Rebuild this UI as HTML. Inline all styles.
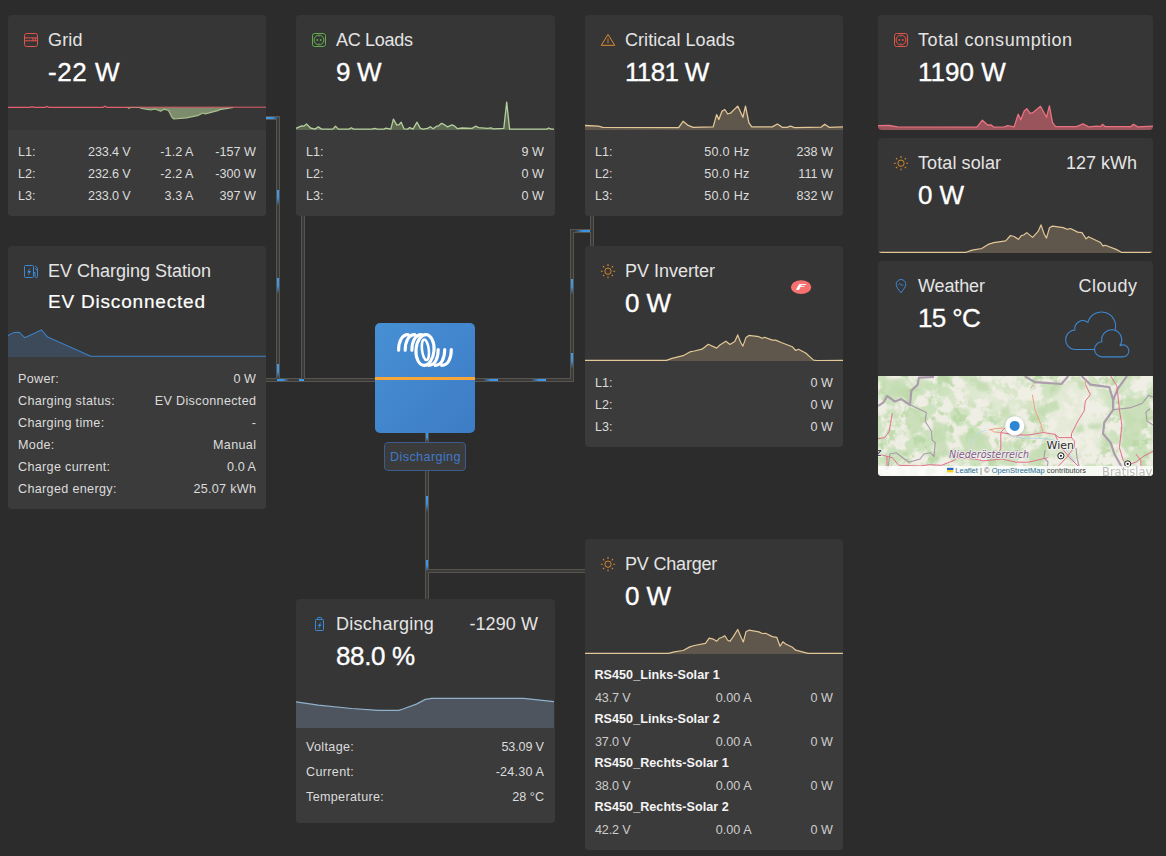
<!DOCTYPE html>
<html lang="en"><head><meta charset="utf-8"><title>Dashboard</title>
<style>
html,body{margin:0;padding:0}
body{width:1166px;height:856px;background:#2c2c2c;position:relative;overflow:hidden;font-family:"Liberation Sans",sans-serif;}
.card{position:absolute;background:#363636;border-radius:4px;overflow:hidden}
.det{position:absolute;left:0;right:0;bottom:0;background:#3b3b3b}
.t{position:absolute;white-space:nowrap}
.v{-webkit-text-stroke:0.35px #fff}
svg{position:absolute;left:0;top:0}
</style></head><body>

<div class="card" id="grid" style="left:8px;top:15px;width:258px;height:201px"><div class="det" style="top:115px"></div></div>
<div class="card" id="ac" style="left:296px;top:15px;width:259px;height:201px"><div class="det" style="top:115px"></div></div>
<div class="card" id="crit" style="left:585px;top:15px;width:258px;height:201px"><div class="det" style="top:115px"></div></div>
<div class="card" id="cons" style="left:878px;top:15px;width:275px;height:115px"></div>
<div class="card" id="solar" style="left:878px;top:138px;width:275px;height:115px"></div>
<div class="card" id="weather" style="left:878px;top:261px;width:275px;height:215px"></div>
<div class="card" id="ev" style="left:8px;top:246px;width:258px;height:263px"><div class="det" style="top:111px"></div></div>
<div class="card" id="pvi" style="left:585px;top:246px;width:258px;height:201px"><div class="det" style="top:115px"></div></div>
<div class="card" id="bat" style="left:296px;top:599px;width:259px;height:224px"><div class="det" style="top:129px"></div></div>
<div class="card" id="pvc" style="left:585px;top:539px;width:258px;height:311px"><div class="det" style="top:115px"></div></div>
<svg width="1166" height="856" viewBox="0 0 1166 856">
<defs>
<linearGradient id="gd" x1="0" y1="0" x2="0" y2="1"><stop offset="0" stop-color="#3d9bf0"/><stop offset="0.5" stop-color="#3d9bf0" stop-opacity="0.9"/><stop offset="1" stop-color="#3d9bf0" stop-opacity="0"/></linearGradient>
<linearGradient id="gu" x1="0" y1="1" x2="0" y2="0"><stop offset="0" stop-color="#3d9bf0"/><stop offset="0.5" stop-color="#3d9bf0" stop-opacity="0.9"/><stop offset="1" stop-color="#3d9bf0" stop-opacity="0"/></linearGradient>
<linearGradient id="gr" x1="0" y1="0" x2="1" y2="0"><stop offset="0" stop-color="#3d9bf0"/><stop offset="0.5" stop-color="#3d9bf0" stop-opacity="0.9"/><stop offset="1" stop-color="#3d9bf0" stop-opacity="0"/></linearGradient>
<linearGradient id="gl" x1="1" y1="0" x2="0" y2="0"><stop offset="0" stop-color="#3d9bf0"/><stop offset="0.5" stop-color="#3d9bf0" stop-opacity="0.9"/><stop offset="1" stop-color="#3d9bf0" stop-opacity="0"/></linearGradient>
<linearGradient id="inv" x1="0" y1="0" x2="1" y2="1"><stop offset="0" stop-color="#4790d4"/><stop offset="1" stop-color="#3d7cc6"/></linearGradient>
</defs>
<path d="M266,118 L278,118 L278,380" fill="none" stroke="#58554f" stroke-width="4" stroke-linejoin="miter"/>
<path d="M266,380 L375,380" fill="none" stroke="#58554f" stroke-width="4" stroke-linejoin="miter"/>
<path d="M303,216 L303,380" fill="none" stroke="#58554f" stroke-width="4" stroke-linejoin="miter"/>
<path d="M475,380 L572,380 L572,231 L592,231" fill="none" stroke="#58554f" stroke-width="4" stroke-linejoin="miter"/>
<path d="M592,216 L592,246" fill="none" stroke="#58554f" stroke-width="4" stroke-linejoin="miter"/>
<path d="M427,433 L427,599" fill="none" stroke="#58554f" stroke-width="4" stroke-linejoin="miter"/>
<path d="M427,571 L585,571" fill="none" stroke="#58554f" stroke-width="4" stroke-linejoin="miter"/>
<path d="M266,118 L278,118 L278,380" fill="none" stroke="#3b3a39" stroke-width="2" stroke-linejoin="miter"/>
<path d="M266,380 L375,380" fill="none" stroke="#3b3a39" stroke-width="2" stroke-linejoin="miter"/>
<path d="M303,216 L303,380" fill="none" stroke="#3b3a39" stroke-width="2" stroke-linejoin="miter"/>
<path d="M475,380 L572,380 L572,231 L592,231" fill="none" stroke="#3b3a39" stroke-width="2" stroke-linejoin="miter"/>
<path d="M592,216 L592,246" fill="none" stroke="#3b3a39" stroke-width="2" stroke-linejoin="miter"/>
<path d="M427,433 L427,599" fill="none" stroke="#3b3a39" stroke-width="2" stroke-linejoin="miter"/>
<path d="M427,571 L585,571" fill="none" stroke="#3b3a39" stroke-width="2" stroke-linejoin="miter"/>
<rect x="266" y="117" width="13" height="2" fill="url(#gr)"/>
<rect x="277" y="190" width="2" height="16" fill="url(#gd)"/>
<rect x="277" y="278" width="2" height="16" fill="url(#gd)"/>
<rect x="277" y="364" width="2" height="15" fill="url(#gd)"/>
<rect x="277" y="379" width="12" height="2" fill="url(#gr)"/>
<rect x="299" y="379" width="5" height="2" fill="#3d9bf0"/>
<rect x="483" y="379" width="15" height="2" fill="url(#gl)"/>
<rect x="531" y="379" width="15" height="2" fill="url(#gl)"/>
<rect x="571" y="279" width="2" height="16" fill="url(#gd)"/>
<rect x="571" y="353" width="2" height="16" fill="url(#gd)"/>
<rect x="575" y="230" width="15" height="2" fill="url(#gl)"/>
<rect x="426" y="433" width="2" height="9" fill="url(#gd)"/>
<rect x="426" y="496" width="2" height="16" fill="url(#gd)"/>
<rect x="426" y="560" width="2" height="12" fill="url(#gd)"/>
</svg>
<svg width="1166" height="856" viewBox="0 0 1166 856">
<path d="M127.5,107.5 L129.0,108.2 L130.5,107.5 L139.5,107.5 L141.8,108.5 L150.7,110.0 L155.0,109.0 L160.7,111.2 L164.0,109.2 L168.5,110.5 L171.9,117.2 L174.0,119.0 L186.4,117.9 L197.5,115.6 L203.0,113.0 L205.3,113.9 L217.6,110.7 L219.8,109.6 L233.2,107.5 Z" fill="#7c8c6c"/>
<path d="M127.5,107.5 L129.0,108.2 L130.5,107.5 L139.5,107.5 L141.8,108.5 L150.7,110.0 L155.0,109.0 L160.7,111.2 L164.0,109.2 L168.5,110.5 L171.9,117.2 L174.0,119.0 L186.4,117.9 L197.5,115.6 L203.0,113.0 L205.3,113.9 L217.6,110.7 L219.8,109.6 L233.2,107.5" fill="none" stroke="#a9c08f" stroke-width="1.2" stroke-linejoin="round"/>
<path d="M8.0,107.4 L30.0,107.4 L32.0,106.7 L34.0,107.4 L45.0,107.4 L47.0,106.5 L49.0,107.4 L103.0,107.4 L105.0,106.3 L107.0,107.4 L128.4,107.4" fill="none" stroke="#e2606f" stroke-width="1.2"/>
<path d="M128.4,107.2 L266,107.2" fill="none" stroke="#e2606f" stroke-width="1"/>
<path d="M296.0,128.4 L301.6,125.8 L303.8,126.2 L306.5,124.0 L310.5,128.0 L315.0,129.1 L318.3,126.9 L321.6,129.1 L332.8,129.1 L335.5,126.2 L338.4,129.1 L349.0,129.1 L351.3,127.8 L353.5,129.1 L371.8,129.1 L374.5,128.4 L377.4,129.1 L384.0,129.1 L385.9,128.2 L390.8,129.1 L393.4,119.1 L396.8,125.1 L399.0,124.7 L401.2,122.2 L404.1,128.9 L407.5,129.1 L409.7,127.6 L413.0,129.1 L417.0,122.2 L420.4,128.4 L423.0,129.1 L427.5,128.4 L430.4,126.7 L433.1,128.7 L436.5,126.2 L438.7,125.8 L441.6,123.3 L444.3,124.7 L447.6,126.9 L452.0,124.9 L454.7,126.2 L457.6,128.7 L462.1,128.0 L472.1,128.4 L475.5,126.2 L478.8,127.6 L487.7,128.4 L491.0,127.8 L493.3,128.9 L503.8,128.4 L506.7,102.1 L509.6,129.1 L546.8,129.1 L548.6,128.0 L551.3,129.1 L554.0,129.1 L554.0,130 L296.0,130 Z" fill="#5c6651" stroke="none"/>
<path d="M296.0,128.4 L301.6,125.8 L303.8,126.2 L306.5,124.0 L310.5,128.0 L315.0,129.1 L318.3,126.9 L321.6,129.1 L332.8,129.1 L335.5,126.2 L338.4,129.1 L349.0,129.1 L351.3,127.8 L353.5,129.1 L371.8,129.1 L374.5,128.4 L377.4,129.1 L384.0,129.1 L385.9,128.2 L390.8,129.1 L393.4,119.1 L396.8,125.1 L399.0,124.7 L401.2,122.2 L404.1,128.9 L407.5,129.1 L409.7,127.6 L413.0,129.1 L417.0,122.2 L420.4,128.4 L423.0,129.1 L427.5,128.4 L430.4,126.7 L433.1,128.7 L436.5,126.2 L438.7,125.8 L441.6,123.3 L444.3,124.7 L447.6,126.9 L452.0,124.9 L454.7,126.2 L457.6,128.7 L462.1,128.0 L472.1,128.4 L475.5,126.2 L478.8,127.6 L487.7,128.4 L491.0,127.8 L493.3,128.9 L503.8,128.4 L506.7,102.1 L509.6,129.1 L546.8,129.1 L548.6,128.0 L551.3,129.1 L554.0,129.1" fill="none" stroke="#b4cf9d" stroke-width="1.3" stroke-linejoin="round"/>
<path d="M585.0,125.5 L598.4,126.2 L602.8,127.3 L678.6,127.6 L683.1,121.3 L687.6,125.1 L693.1,127.3 L713.2,126.9 L716.6,114.6 L718.8,119.5 L722.1,111.1 L724.8,109.5 L727.7,114.0 L731.0,112.8 L737.7,106.1 L742.9,117.3 L745.5,106.1 L748.9,122.9 L751.8,126.9 L772.3,126.9 L777.4,124.0 L782.3,127.3 L786.8,127.3 L790.6,126.2 L794.6,127.6 L821.3,127.1 L824.7,124.2 L829.1,127.3 L843.0,126.9 L843.0,130 L585.0,130 Z" fill="#5f574b" stroke="none"/>
<path d="M585.0,125.5 L598.4,126.2 L602.8,127.3 L678.6,127.6 L683.1,121.3 L687.6,125.1 L693.1,127.3 L713.2,126.9 L716.6,114.6 L718.8,119.5 L722.1,111.1 L724.8,109.5 L727.7,114.0 L731.0,112.8 L737.7,106.1 L742.9,117.3 L745.5,106.1 L748.9,122.9 L751.8,126.9 L772.3,126.9 L777.4,124.0 L782.3,127.3 L786.8,127.3 L790.6,126.2 L794.6,127.6 L821.3,127.1 L824.7,124.2 L829.1,127.3 L843.0,126.9" fill="none" stroke="#e3c798" stroke-width="1.3" stroke-linejoin="round"/>
<clipPath id="cc"><rect x="878" y="15" width="275" height="115" rx="4"/></clipPath><g clip-path="url(#cc)">
<path d="M878.0,125.7 L889.2,125.5 L897.6,126.9 L976.9,127.2 L982.4,120.2 L987.7,125.0 L991.3,125.0 L993.7,127.2 L1004.5,126.9 L1007.6,125.7 L1014.1,126.9 L1018.2,114.2 L1020.8,119.7 L1024.2,111.1 L1026.8,108.7 L1030.2,113.5 L1033.3,112.3 L1040.5,106.3 L1046.5,117.3 L1049.4,105.8 L1052.5,122.6 L1055.6,126.7 L1076.5,126.7 L1083.0,123.8 L1088.5,126.9 L1096.9,126.2 L1100.5,126.7 L1102.5,124.3 L1105.3,126.7 L1130.6,126.7 L1133.4,124.3 L1137.8,126.9 L1153.0,126.2 L1153.0,130 L878.0,130 Z" fill="#9a555c" stroke="none"/>
<path d="M878.0,125.7 L889.2,125.5 L897.6,126.9 L976.9,127.2 L982.4,120.2 L987.7,125.0 L991.3,125.0 L993.7,127.2 L1004.5,126.9 L1007.6,125.7 L1014.1,126.9 L1018.2,114.2 L1020.8,119.7 L1024.2,111.1 L1026.8,108.7 L1030.2,113.5 L1033.3,112.3 L1040.5,106.3 L1046.5,117.3 L1049.4,105.8 L1052.5,122.6 L1055.6,126.7 L1076.5,126.7 L1083.0,123.8 L1088.5,126.9 L1096.9,126.2 L1100.5,126.7 L1102.5,124.3 L1105.3,126.7 L1130.6,126.7 L1133.4,124.3 L1137.8,126.9 L1153.0,126.2" fill="none" stroke="#ea7280" stroke-width="1.3" stroke-linejoin="round"/>
</g>
<clipPath id="cs"><rect x="878" y="138" width="275" height="115" rx="4"/></clipPath><g clip-path="url(#cs)">
<path d="M878.0,252.3 L966.1,252.3 L972.1,250.1 L981.7,248.5 L988.9,244.1 L993.7,242.7 L1005.7,240.8 L1010.5,235.5 L1014.1,236.5 L1018.4,239.3 L1021.3,235.7 L1023.7,235.0 L1026.8,232.6 L1032.6,237.4 L1038.1,231.4 L1041.0,224.9 L1044.1,233.8 L1046.5,238.1 L1049.4,227.8 L1052.5,226.1 L1063.3,227.6 L1066.9,229.3 L1070.5,228.5 L1077.7,232.1 L1082.0,232.6 L1086.1,238.9 L1088.5,236.7 L1100.5,242.5 L1102.9,245.8 L1105.3,245.3 L1116.1,249.4 L1121.4,252.3 L1153.0,252.3 L1153.0,253 L878.0,253 Z" fill="#5f574b" stroke="none"/>
<path d="M878.0,252.3 L966.1,252.3 L972.1,250.1 L981.7,248.5 L988.9,244.1 L993.7,242.7 L1005.7,240.8 L1010.5,235.5 L1014.1,236.5 L1018.4,239.3 L1021.3,235.7 L1023.7,235.0 L1026.8,232.6 L1032.6,237.4 L1038.1,231.4 L1041.0,224.9 L1044.1,233.8 L1046.5,238.1 L1049.4,227.8 L1052.5,226.1 L1063.3,227.6 L1066.9,229.3 L1070.5,228.5 L1077.7,232.1 L1082.0,232.6 L1086.1,238.9 L1088.5,236.7 L1100.5,242.5 L1102.9,245.8 L1105.3,245.3 L1116.1,249.4 L1121.4,252.3 L1153.0,252.3" fill="none" stroke="#e3c798" stroke-width="1.2" stroke-linejoin="round"/>
</g>
<path d="M585.0,360.4 L666.4,360.4 L672.0,358.4 L683.1,355.7 L689.8,351.9 L694.3,351.0 L702.1,349.2 L708.3,344.3 L716.6,348.1 L719.9,345.0 L725.9,341.2 L729.9,344.5 L734.8,341.6 L737.7,334.9 L740.6,342.3 L742.9,346.1 L746.0,337.4 L748.9,335.4 L758.9,336.7 L762.3,338.3 L764.5,337.2 L772.3,340.1 L775.6,340.1 L781.2,342.5 L792.4,346.8 L795.7,350.5 L798.4,349.2 L805.7,353.0 L813.5,360.1 L816.9,360.5 L843.0,360.4 L843.0,361 L585.0,361 Z" fill="#5f574b" stroke="none"/>
<path d="M585.0,360.4 L666.4,360.4 L672.0,358.4 L683.1,355.7 L689.8,351.9 L694.3,351.0 L702.1,349.2 L708.3,344.3 L716.6,348.1 L719.9,345.0 L725.9,341.2 L729.9,344.5 L734.8,341.6 L737.7,334.9 L740.6,342.3 L742.9,346.1 L746.0,337.4 L748.9,335.4 L758.9,336.7 L762.3,338.3 L764.5,337.2 L772.3,340.1 L775.6,340.1 L781.2,342.5 L792.4,346.8 L795.7,350.5 L798.4,349.2 L805.7,353.0 L813.5,360.1 L816.9,360.5 L843.0,360.4" fill="none" stroke="#e3c798" stroke-width="1.2" stroke-linejoin="round"/>
<path d="M585.0,653.4 L668.6,653.4 L674.2,651.8 L683.1,650.5 L689.8,646.9 L694.3,645.5 L705.4,643.3 L709.2,638.2 L713.2,639.1 L716.6,641.3 L719.4,638.2 L722.1,637.3 L724.8,635.7 L727.7,640.2 L729.9,641.3 L733.3,636.6 L737.7,629.5 L741.1,637.3 L743.3,642.0 L746.0,631.7 L748.9,630.2 L758.9,631.9 L762.3,633.5 L765.6,633.3 L772.3,636.6 L776.7,637.3 L780.1,646.2 L782.8,641.8 L785.7,644.0 L792.4,647.3 L795.7,650.2 L808.0,653.4 L843.0,653.4 L843.0,654 L585.0,654 Z" fill="#5f574b" stroke="none"/>
<path d="M585.0,653.4 L668.6,653.4 L674.2,651.8 L683.1,650.5 L689.8,646.9 L694.3,645.5 L705.4,643.3 L709.2,638.2 L713.2,639.1 L716.6,641.3 L719.4,638.2 L722.1,637.3 L724.8,635.7 L727.7,640.2 L729.9,641.3 L733.3,636.6 L737.7,629.5 L741.1,637.3 L743.3,642.0 L746.0,631.7 L748.9,630.2 L758.9,631.9 L762.3,633.5 L765.6,633.3 L772.3,636.6 L776.7,637.3 L780.1,646.2 L782.8,641.8 L785.7,644.0 L792.4,647.3 L795.7,650.2 L808.0,653.4 L843.0,653.4" fill="none" stroke="#e3c798" stroke-width="1.2" stroke-linejoin="round"/>
<path d="M8.0,335.5 L14.2,332.4 L19.1,332.2 L24.7,337.7 L41.4,329.9 L47.7,337.1 L90.9,356.2 L266.0,356.2 L266.0,357 L8.0,357 Z" fill="#3c4a5a" stroke="none"/>
<path d="M8.0,335.5 L14.2,332.4 L19.1,332.2 L24.7,337.7 L41.4,329.9 L47.7,337.1 L90.9,356.2 L266.0,356.2" fill="none" stroke="#3e80c4" stroke-width="1.05" stroke-linejoin="round"/>
<path d="M296.0,701.9 L318.3,705.2 L351.7,708.5 L378.5,710.3 L398.6,710.3 L403.0,709.0 L416.4,704.1 L425.3,699.4 L432.0,698.3 L523.4,698.3 L554.0,701.6 L554.0,728 L296.0,728 Z" fill="#4e555e" stroke="none"/>
<path d="M296.0,701.9 L318.3,705.2 L351.7,708.5 L378.5,710.3 L398.6,710.3 L403.0,709.0 L416.4,704.1 L425.3,699.4 L432.0,698.3 L523.4,698.3 L554.0,701.6" fill="none" stroke="#90b1cd" stroke-width="1.2" stroke-linejoin="round"/>
<rect x="375" y="323" width="100" height="110" rx="5" fill="url(#inv)"/>
<rect x="375" y="377" width="100" height="3" fill="#f7a73a"/>
<g transform="translate(385,320)" fill="none" stroke="#fff" stroke-width="3.1" stroke-linecap="round">
<path d="M13.6,30.3 C13.6,21.5 16.8,14.6 23.2,14.6"/>
<path d="M20.2,30.3 C20.2,21.5 23.4,14.6 29.799999999999997,14.6"/>
<path d="M26.9,30.3 C26.9,21.5 30.099999999999998,14.6 36.5,14.6"/>
<ellipse cx="40" cy="30" rx="9" ry="15.4" transform="rotate(4.5 40 30)"/>
<ellipse cx="40.4" cy="29.8" rx="3.4" ry="10.3" stroke-width="2.6" transform="rotate(-7 40.4 29.8)"/>
<path d="M66.3,29.5 C66.3,38.3 63.099999999999994,45.4 56.699999999999996,45.4"/>
<path d="M59.7,29.5 C59.7,38.3 56.5,45.4 50.1,45.4"/>
<path d="M53.2,29.5 C53.2,38.3 50.0,45.4 43.6,45.4"/>
</g>
</svg>
<div style="position:absolute;left:384px;top:442px;width:80px;height:27px;border:1px solid #3b5c8c;border-radius:4px;background:#3b3b3b"></div>
<div class="t" style="top:451px;font-size:12.6px;line-height:12.6px;color:#3f79c9;left:390px;letter-spacing:0.4px;">Discharging</div>
<svg width="1166" height="856" viewBox="0 0 1166 856" fill="none">
<g stroke="#e2554d" stroke-width="1"><rect x="24.5" y="33.5" width="13" height="13" rx="2.2"/><path d="M24.5,37.9H37.5M24.5,40.8H37.5M32.9,37.9V40.8M35.3,37.9V40.8"/></g>
<g stroke="#62ad4c" stroke-width="1"><rect x="312.5" y="33.5" width="13" height="13" rx="2.2"/><circle cx="319" cy="40" r="4.9"/><path d="M319,35.6v1.2M319,43.2v1.2" stroke-width="0.8"/></g><circle cx="317.3" cy="40" r="0.9" fill="#62ad4c"/><circle cx="320.7" cy="40" r="0.9" fill="#62ad4c"/>
<g stroke="#e2554d" stroke-width="1"><rect x="894.5" y="33.5" width="13" height="13" rx="2.2"/><circle cx="901" cy="40" r="4.9"/><path d="M901,35.6v1.2M901,43.2v1.2" stroke-width="0.8"/></g><circle cx="899.3" cy="40" r="0.9" fill="#e2554d"/><circle cx="902.7" cy="40" r="0.9" fill="#e2554d"/>
<g stroke="#e8912c" stroke-width="0.95" stroke-linejoin="round"><path d="M608,34.4 L614.7,45.3 L601.3,45.3 Z"/><path d="M608,38.5V43.2" stroke-width="1" opacity="0.85"/></g>
<g stroke="#e8912c" opacity="0.92"><circle cx="901" cy="163.2" r="3.15" stroke-width="0.95"/><path d="M906.30,163.20L908.10,163.20M904.75,166.95L906.02,168.22M901.00,168.50L901.00,170.30M897.25,166.95L895.98,168.22M895.70,163.20L893.90,163.20M897.25,159.45L895.98,158.18M901.00,157.90L901.00,156.10M904.75,159.45L906.02,158.18" stroke-width="1.05"/></g>
<g stroke="#e8912c" opacity="0.92"><circle cx="608" cy="271.2" r="3.15" stroke-width="0.95"/><path d="M613.30,271.20L615.10,271.20M611.75,274.95L613.02,276.22M608.00,276.50L608.00,278.30M604.25,274.95L602.98,276.22M602.70,271.20L600.90,271.20M604.25,267.45L602.98,266.18M608.00,265.90L608.00,264.10M611.75,267.45L613.02,266.18" stroke-width="1.05"/></g>
<g stroke="#e8912c" opacity="0.92"><circle cx="608" cy="564.2" r="3.15" stroke-width="0.95"/><path d="M613.30,564.20L615.10,564.20M611.75,567.95L613.02,569.22M608.00,569.50L608.00,571.30M604.25,567.95L602.98,569.22M602.70,564.20L600.90,564.20M604.25,560.45L602.98,559.18M608.00,558.90L608.00,557.10M611.75,560.45L613.02,559.18" stroke-width="1.05"/></g>
<g stroke="#3a8ad6" stroke-width="1" stroke-linejoin="round"><path d="M901,292.8 C898.2,289 896.2,286.8 896.2,284.3 A4.8,4.8 0 0 1 905.8,284.3 C905.8,286.8 903.8,289 901,292.8 Z"/><path d="M898.6,284.6 q1.2,-1.9 2.4,0 t2.4,0" stroke-width="0.95"/></g>
<g stroke="#3a8ad6" stroke-width="1"><rect x="24.5" y="265.5" width="9" height="12" rx="1"/><path d="M33.5,272.5h1.5v3.9a1.25,1.25 0 0 0 2.5,0v-8l-2.2,-2.7M35.4,268.2a1.1,1.1 0 0 0 2,0.9"/></g><path d="M30,267.7l-3,4.7h1.9l-0.9,3.5l3.1,-4.9h-1.9z" fill="#3a8ad6"/>
<g stroke="#3a8ad6" stroke-width="1"><rect x="315.5" y="619.5" width="8" height="11" rx="0.8"/><path d="M317.5,619.5v-1.3a0.7,0.7 0 0 1 0.7,-0.7h2.6a0.7,0.7 0 0 1 0.7,0.7v1.3"/></g><path d="M321.9,620.9l-4.4,5h2.1l-2.2,3.8l4.5,-5.2h-2.1z" fill="#3a8ad6"/>
<ellipse cx="801.1" cy="287.1" rx="10.2" ry="6.9" fill="#f87171"/>
<path d="M799.2,284.1h7l-0.5,0.9h-4.2l-0.6,1.2h3.9l-0.5,0.9h-3.9l-1.4,2.8h-3.2z" fill="#fff"/>
<g stroke="#3d89d3" stroke-width="1.1"><path d="M1094.3,349.5 L1074.2,349.5 A9.85,9.85 0 0 1 1074.9,329.9 A8.1,8.1 0 0 1 1087.9,322.3 A14.1,14.1 0 0 1 1115.1,329.9"/><path d="M1101.6,356.9 L1122.9,356.9 A6.02,6.02 0 1 0 1119.8,345.7 A10,10 0 1 0 1101.9,341.8 A7.56,7.56 0 0 0 1101.6,356.9 Z"/></g>
</svg>
<div class="t" style="top:31px;font-size:18px;line-height:18px;color:#e4e4e4;left:48px;letter-spacing:0.14px;">Grid</div>
<div class="t v" style="top:59px;font-size:26px;line-height:26px;color:#ffffff;left:48px;letter-spacing:0.57px;">-22 W</div>
<div class="t" style="top:31px;font-size:18px;line-height:18px;color:#e4e4e4;left:336px;letter-spacing:-0.3px;">AC Loads</div>
<div class="t v" style="top:59px;font-size:26px;line-height:26px;color:#ffffff;left:336px;letter-spacing:-0.29px;">9 W</div>
<div class="t" style="top:31px;font-size:18px;line-height:18px;color:#e4e4e4;left:625px;letter-spacing:0.06px;">Critical Loads</div>
<div class="t v" style="top:59px;font-size:26px;line-height:26px;color:#ffffff;left:625px;letter-spacing:-0.67px;">1181 W</div>
<div class="t" style="top:31px;font-size:18px;line-height:18px;color:#e4e4e4;left:918px;letter-spacing:0.56px;">Total consumption</div>
<div class="t v" style="top:59px;font-size:26px;line-height:26px;color:#ffffff;left:918px;letter-spacing:0.03px;">1190 W</div>
<div class="t" style="top:154px;font-size:18px;line-height:18px;color:#e4e4e4;left:918px;letter-spacing:0.1px;">Total solar</div>
<div class="t v" style="top:182px;font-size:26px;line-height:26px;color:#ffffff;left:918px;letter-spacing:-0.14px;">0 W</div>
<div class="t" style="top:277px;font-size:18px;line-height:18px;color:#e4e4e4;left:918px;letter-spacing:-0.13px;">Weather</div>
<div class="t v" style="top:305px;font-size:26px;line-height:26px;color:#ffffff;left:918px;letter-spacing:-0.64px;">15 °C</div>
<div class="t" style="top:262px;font-size:18px;line-height:18px;color:#e4e4e4;left:48px;">EV Charging Station</div>
<div class="t v" style="top:292px;font-size:19px;line-height:19px;color:#ffffff;left:48px;-webkit-text-stroke:0.2px #fff;letter-spacing:0.8px;">EV Disconnected</div>
<div class="t" style="top:262px;font-size:18px;line-height:18px;color:#e4e4e4;left:625px;">PV Inverter</div>
<div class="t v" style="top:290px;font-size:26px;line-height:26px;color:#ffffff;left:625px;letter-spacing:-0.14px;">0 W</div>
<div class="t" style="top:615px;font-size:18px;line-height:18px;color:#e4e4e4;left:336px;letter-spacing:0.28px;">Discharging</div>
<div class="t v" style="top:643px;font-size:26px;line-height:26px;color:#ffffff;left:336px;letter-spacing:-0.35px;">88.0 %</div>
<div class="t" style="top:555px;font-size:18px;line-height:18px;color:#e4e4e4;left:625px;letter-spacing:-0.19px;">PV Charger</div>
<div class="t v" style="top:583px;font-size:26px;line-height:26px;color:#ffffff;left:625px;letter-spacing:-0.14px;">0 W</div>
<div class="t" style="top:154px;font-size:18px;line-height:18px;color:#e4e4e4;right:29px;">127 kWh</div>
<div class="t" style="top:277px;font-size:18px;line-height:18px;color:#e4e4e4;right:28.5px;letter-spacing:0.5px;">Cloudy</div>
<div class="t" style="top:615px;font-size:18px;line-height:18px;color:#e4e4e4;right:627.91px;letter-spacing:0.09px;">-1290 W</div>
<div class="t" style="top:146px;font-size:12.6px;line-height:12.6px;color:#dcdcdc;left:18px;letter-spacing:0.05px;">L1:</div>
<div class="t" style="top:146px;font-size:12.6px;line-height:12.6px;color:#dcdcdc;right:1035.55px;letter-spacing:-0.15px;">233.4 V</div>
<div class="t" style="top:146px;font-size:12.6px;line-height:12.6px;color:#dcdcdc;right:972.45px;letter-spacing:0.05px;">-1.2 A</div>
<div class="t" style="top:146px;font-size:12.6px;line-height:12.6px;color:#dcdcdc;right:909.95px;letter-spacing:0.05px;">-157 W</div>
<div class="t" style="top:168px;font-size:12.6px;line-height:12.6px;color:#dcdcdc;left:18px;letter-spacing:0.05px;">L2:</div>
<div class="t" style="top:168px;font-size:12.6px;line-height:12.6px;color:#dcdcdc;right:1035.55px;letter-spacing:-0.15px;">232.6 V</div>
<div class="t" style="top:168px;font-size:12.6px;line-height:12.6px;color:#dcdcdc;right:972.45px;letter-spacing:0.05px;">-2.2 A</div>
<div class="t" style="top:168px;font-size:12.6px;line-height:12.6px;color:#dcdcdc;right:909.95px;letter-spacing:0.05px;">-300 W</div>
<div class="t" style="top:190px;font-size:12.6px;line-height:12.6px;color:#dcdcdc;left:18px;letter-spacing:0.05px;">L3:</div>
<div class="t" style="top:190px;font-size:12.6px;line-height:12.6px;color:#dcdcdc;right:1035.55px;letter-spacing:-0.15px;">233.0 V</div>
<div class="t" style="top:190px;font-size:12.6px;line-height:12.6px;color:#dcdcdc;right:972.45px;letter-spacing:0.05px;">3.3 A</div>
<div class="t" style="top:190px;font-size:12.6px;line-height:12.6px;color:#dcdcdc;right:909.95px;letter-spacing:0.05px;">397 W</div>
<div class="t" style="top:146px;font-size:12.6px;line-height:12.6px;color:#dcdcdc;left:306px;letter-spacing:0.05px;">L1:</div>
<div class="t" style="top:146px;font-size:12.6px;line-height:12.6px;color:#dcdcdc;right:621.95px;letter-spacing:0.05px;">9 W</div>
<div class="t" style="top:168px;font-size:12.6px;line-height:12.6px;color:#dcdcdc;left:306px;letter-spacing:0.05px;">L2:</div>
<div class="t" style="top:168px;font-size:12.6px;line-height:12.6px;color:#dcdcdc;right:621.95px;letter-spacing:0.05px;">0 W</div>
<div class="t" style="top:190px;font-size:12.6px;line-height:12.6px;color:#dcdcdc;left:306px;letter-spacing:0.05px;">L3:</div>
<div class="t" style="top:190px;font-size:12.6px;line-height:12.6px;color:#dcdcdc;right:621.95px;letter-spacing:0.05px;">0 W</div>
<div class="t" style="top:146px;font-size:12.6px;line-height:12.6px;color:#dcdcdc;left:595px;letter-spacing:0.05px;">L1:</div>
<div class="t" style="top:146px;font-size:12.6px;line-height:12.6px;color:#dcdcdc;right:416.30000000000007px;letter-spacing:0.3px;">50.0 Hz</div>
<div class="t" style="top:146px;font-size:12.6px;line-height:12.6px;color:#dcdcdc;right:332.95000000000005px;letter-spacing:0.05px;">238 W</div>
<div class="t" style="top:168px;font-size:12.6px;line-height:12.6px;color:#dcdcdc;left:595px;letter-spacing:0.05px;">L2:</div>
<div class="t" style="top:168px;font-size:12.6px;line-height:12.6px;color:#dcdcdc;right:416.30000000000007px;letter-spacing:0.3px;">50.0 Hz</div>
<div class="t" style="top:168px;font-size:12.6px;line-height:12.6px;color:#dcdcdc;right:332.95000000000005px;letter-spacing:0.05px;">111 W</div>
<div class="t" style="top:190px;font-size:12.6px;line-height:12.6px;color:#dcdcdc;left:595px;letter-spacing:0.05px;">L3:</div>
<div class="t" style="top:190px;font-size:12.6px;line-height:12.6px;color:#dcdcdc;right:416.30000000000007px;letter-spacing:0.3px;">50.0 Hz</div>
<div class="t" style="top:190px;font-size:12.6px;line-height:12.6px;color:#dcdcdc;right:332.95000000000005px;letter-spacing:0.05px;">832 W</div>
<div class="t" style="top:377px;font-size:12.6px;line-height:12.6px;color:#dcdcdc;left:595px;letter-spacing:0.05px;">L1:</div>
<div class="t" style="top:377px;font-size:12.6px;line-height:12.6px;color:#dcdcdc;right:332.95000000000005px;letter-spacing:0.05px;">0 W</div>
<div class="t" style="top:399px;font-size:12.6px;line-height:12.6px;color:#dcdcdc;left:595px;letter-spacing:0.05px;">L2:</div>
<div class="t" style="top:399px;font-size:12.6px;line-height:12.6px;color:#dcdcdc;right:332.95000000000005px;letter-spacing:0.05px;">0 W</div>
<div class="t" style="top:421px;font-size:12.6px;line-height:12.6px;color:#dcdcdc;left:595px;letter-spacing:0.05px;">L3:</div>
<div class="t" style="top:421px;font-size:12.6px;line-height:12.6px;color:#dcdcdc;right:332.95000000000005px;letter-spacing:0.05px;">0 W</div>
<div class="t" style="top:373px;font-size:12.6px;line-height:12.6px;color:#dcdcdc;left:18px;letter-spacing:0.33px;">Power:</div>
<div class="t" style="top:373px;font-size:12.6px;line-height:12.6px;color:#dcdcdc;right:909.95px;letter-spacing:0.05px;">0 W</div>
<div class="t" style="top:395px;font-size:12.6px;line-height:12.6px;color:#dcdcdc;left:18px;letter-spacing:0.33px;">Charging status:</div>
<div class="t" style="top:395px;font-size:12.6px;line-height:12.6px;color:#dcdcdc;right:909.6700000000001px;letter-spacing:0.33px;">EV Disconnected</div>
<div class="t" style="top:417px;font-size:12.6px;line-height:12.6px;color:#dcdcdc;left:18px;letter-spacing:0.33px;">Charging time:</div>
<div class="t" style="top:417px;font-size:12.6px;line-height:12.6px;color:#dcdcdc;right:909.95px;letter-spacing:0.05px;">-</div>
<div class="t" style="top:439px;font-size:12.6px;line-height:12.6px;color:#dcdcdc;left:18px;letter-spacing:0.33px;">Mode:</div>
<div class="t" style="top:439px;font-size:12.6px;line-height:12.6px;color:#dcdcdc;right:909.6700000000001px;letter-spacing:0.33px;">Manual</div>
<div class="t" style="top:461px;font-size:12.6px;line-height:12.6px;color:#dcdcdc;left:18px;letter-spacing:0.33px;">Charge current:</div>
<div class="t" style="top:461px;font-size:12.6px;line-height:12.6px;color:#dcdcdc;right:909.95px;letter-spacing:0.05px;">0.0 A</div>
<div class="t" style="top:483px;font-size:12.6px;line-height:12.6px;color:#dcdcdc;left:18px;letter-spacing:0.33px;">Charged energy:</div>
<div class="t" style="top:483px;font-size:12.6px;line-height:12.6px;color:#dcdcdc;right:909.7px;letter-spacing:0.3px;">25.07 kWh</div>
<div class="t" style="top:741px;font-size:12.6px;line-height:12.6px;color:#dcdcdc;left:306px;letter-spacing:0.33px;">Voltage:</div>
<div class="t" style="top:741px;font-size:12.6px;line-height:12.6px;color:#dcdcdc;right:622.15px;letter-spacing:-0.15px;">53.09 V</div>
<div class="t" style="top:766px;font-size:12.6px;line-height:12.6px;color:#dcdcdc;left:306px;letter-spacing:0.33px;">Current:</div>
<div class="t" style="top:766px;font-size:12.6px;line-height:12.6px;color:#dcdcdc;right:621.8px;letter-spacing:0.2px;">-24.30 A</div>
<div class="t" style="top:791px;font-size:12.6px;line-height:12.6px;color:#dcdcdc;left:306px;letter-spacing:0.33px;">Temperature:</div>
<div class="t" style="top:791px;font-size:12.6px;line-height:12.6px;color:#dcdcdc;right:621.95px;letter-spacing:0.05px;">28 °C</div>
<div class="t" style="top:669px;font-size:12.6px;line-height:12.6px;color:#f4f4f4;left:594.5px;font-weight:bold;letter-spacing:0.03px;">RS450_Links-Solar 1</div>
<div class="t" style="top:692px;font-size:12.6px;line-height:12.6px;color:#cdcdcd;left:595px;letter-spacing:-0.15px;">43.7 V</div>
<div class="t" style="top:692px;font-size:12.6px;line-height:12.6px;color:#cdcdcd;right:414.35px;letter-spacing:0.05px;">0.00 A</div>
<div class="t" style="top:692px;font-size:12.6px;line-height:12.6px;color:#cdcdcd;right:332.95000000000005px;letter-spacing:0.05px;">0 W</div>
<div class="t" style="top:713px;font-size:12.6px;line-height:12.6px;color:#f4f4f4;left:594.5px;font-weight:bold;letter-spacing:0.03px;">RS450_Links-Solar 2</div>
<div class="t" style="top:736px;font-size:12.6px;line-height:12.6px;color:#cdcdcd;left:595px;letter-spacing:-0.15px;">37.0 V</div>
<div class="t" style="top:736px;font-size:12.6px;line-height:12.6px;color:#cdcdcd;right:414.35px;letter-spacing:0.05px;">0.00 A</div>
<div class="t" style="top:736px;font-size:12.6px;line-height:12.6px;color:#cdcdcd;right:332.95000000000005px;letter-spacing:0.05px;">0 W</div>
<div class="t" style="top:757px;font-size:12.6px;line-height:12.6px;color:#f4f4f4;left:594.5px;font-weight:bold;letter-spacing:0.03px;">RS450_Rechts-Solar 1</div>
<div class="t" style="top:780px;font-size:12.6px;line-height:12.6px;color:#cdcdcd;left:595px;letter-spacing:-0.15px;">38.0 V</div>
<div class="t" style="top:780px;font-size:12.6px;line-height:12.6px;color:#cdcdcd;right:414.35px;letter-spacing:0.05px;">0.00 A</div>
<div class="t" style="top:780px;font-size:12.6px;line-height:12.6px;color:#cdcdcd;right:332.95000000000005px;letter-spacing:0.05px;">0 W</div>
<div class="t" style="top:801px;font-size:12.6px;line-height:12.6px;color:#f4f4f4;left:594.5px;font-weight:bold;letter-spacing:0.03px;">RS450_Rechts-Solar 2</div>
<div class="t" style="top:824px;font-size:12.6px;line-height:12.6px;color:#cdcdcd;left:595px;letter-spacing:-0.15px;">42.2 V</div>
<div class="t" style="top:824px;font-size:12.6px;line-height:12.6px;color:#cdcdcd;right:414.35px;letter-spacing:0.05px;">0.00 A</div>
<div class="t" style="top:824px;font-size:12.6px;line-height:12.6px;color:#cdcdcd;right:332.95000000000005px;letter-spacing:0.05px;">0 W</div>
<svg width="1166" height="856" viewBox="0 0 1166 856" fill="none">
<defs>
<clipPath id="mc"><path d="M878,376H1153V472a4,4 0 0 1 -4,4H882a4,4 0 0 1 -4,-4Z"/></clipPath>
<filter id="nz" x="0" y="0" width="100%" height="100%" color-interpolation-filters="sRGB"><feTurbulence type="fractalNoise" baseFrequency="0.06" numOctaves="5" seed="7"/><feColorMatrix type="matrix" values="0 0 0 0 0.80  0 0 0 0 0.885  0 0 0 0 0.74  7 0 0 0 -3.05"/></filter>
<filter id="nz2" x="0" y="0" width="100%" height="100%" color-interpolation-filters="sRGB"><feTurbulence type="fractalNoise" baseFrequency="0.08" numOctaves="5" seed="33"/><feColorMatrix type="matrix" values="0 0 0 0 0.72  0 0 0 0 0.84  0 0 0 0 0.64  0 8 0 0 -4.5"/></filter>
<filter id="sh" x="-50%" y="-50%" width="200%" height="200%"><feGaussianBlur stdDeviation="1.6"/></filter>
<filter id="bl" x="-20%" y="-20%" width="140%" height="140%"><feGaussianBlur stdDeviation="1.2"/></filter>
<filter id="bl2" x="-50%" y="-50%" width="200%" height="200%"><feGaussianBlur stdDeviation="5"/></filter>
</defs>
<g clip-path="url(#mc)">
<rect x="878" y="376" width="275" height="100" fill="#efeee4"/>
<rect x="878" y="376" width="275" height="100" filter="url(#nz)"/>
<rect x="878" y="376" width="275" height="100" filter="url(#nz2)" opacity="0.8"/>
<g fill="#f1f0e6" filter="url(#bl2)"><ellipse cx="1078" cy="420" rx="30" ry="42" opacity="0.7"/><ellipse cx="1012" cy="398" rx="30" ry="16" opacity="0.5"/><ellipse cx="972" cy="396" rx="22" ry="13" opacity="0.45"/><ellipse cx="1140" cy="384" rx="14" ry="8" opacity="0.6"/><ellipse cx="1012" cy="428" rx="16" ry="12" opacity="0.5"/></g>
<g fill="#c3dcb1" filter="url(#bl)" opacity="0.8">
<path d="M1123.0,398.0 L1147.0,397.0 L1151.0,410.0 L1146.0,425.0 L1135.0,440.0 L1127.0,452.0 L1121.0,446.0 L1124.0,420.0Z"/>
<path d="M1036.0,410.0 L1057.0,400.0 L1060.0,409.0 L1042.0,416.0Z"/>
<path d="M1075.0,428.0 L1082.0,424.0 L1084.0,431.0 L1077.0,434.0Z"/>
<path d="M1087.0,424.0 L1102.0,423.0 L1101.0,429.0 L1089.0,429.0Z"/>
<path d="M1030.0,452.0 L1046.0,444.0 L1044.0,462.0 L1028.0,466.0Z"/>
<path d="M933.0,420.0 L948.0,425.0 L946.0,440.0 L950.0,455.0 L938.0,458.0 L932.0,440.0Z"/>
<path d="M958.0,436.0 L972.0,432.0 L990.0,436.0 L985.0,450.0 L965.0,452.0Z"/>
<path d="M880.0,380.0 L905.0,378.0 L908.0,395.0 L895.0,397.0 L882.0,392.0Z"/>
<path d="M905.0,410.0 L920.0,408.0 L922.0,430.0 L910.0,436.0Z"/>
<path d="M975.0,380.0 L990.0,383.0 L986.0,392.0 L977.0,390.0Z"/>
<path d="M1078.0,380.0 L1086.0,382.0 L1084.0,390.0 L1078.0,388.0Z"/>
<path d="M1000.0,410.0 L1008.0,405.0 L1010.0,415.0 L1003.0,418.0Z"/>
</g>
<path d="M1016,437 C1030,440 1045,436 1056,441 S1068,455 1075,462" stroke="#b7d6e6" stroke-width="1.2"/>
<path d="M970,446 C972,436 980,432 986,430" stroke="#b7d6e6" stroke-width="0.8"/>
<path d="M934.0,377.0 L918.9,377.7 L917.6,384.6 L911.3,390.9 L910.0,404.8 L901.2,399.1 L894.9,401.6 L887.3,396.0 L883.6,402.3 L878.0,406.0" stroke="#a999aa" stroke-width="2.2" stroke-linejoin="round" opacity="0.95"/>
<path d="M1024.8,376.4 L1034.9,382.1 L1061.4,384.0 L1068.3,376.0" stroke="#a999aa" stroke-width="2.2" stroke-linejoin="round" opacity="0.95"/>
<path d="M1081.6,376.0 L1090.4,384.6 L1109.3,387.1 L1113.1,399.7 L1113.1,409.8 L1104.3,422.4 L1103.0,433.8 L1110.6,442.6 L1114.4,454.0 L1120.7,465.3 L1124.0,470.0" stroke="#a999aa" stroke-width="2.2" stroke-linejoin="round" opacity="0.95"/>
<path d="M1127.0,376.0 L1118.1,388.4 L1113.1,399.7" stroke="#a999aa" stroke-width="2.2" stroke-linejoin="round" opacity="0.95"/>
<path d="M910.0,404.8 L926.4,412.4 L925.2,421.2 L931.5,431.3 L932.1,440.1 L935.3,442.6 L934.0,456.5 L930.2,452.7 L923.9,454.0 L920.1,459.0 L908.8,462.2 L896.2,452.7 L889.9,454.0 L888.0,468.0" stroke="#a999aa" stroke-width="1.1" stroke-linejoin="round"/>
<path d="M1113.1,409.8 L1129.5,407.9 L1142.1,403.5 L1148.4,395.3 L1153.0,397.2" stroke="#a999aa" stroke-width="1.1" stroke-linejoin="round"/>
<path d="M1153.0,425.0 L1147.0,421.0 L1145.9,412.4 L1149.7,408.6" stroke="#a999aa" stroke-width="1.1" stroke-linejoin="round"/>
<path d="M1045.0,450.0 L1044.0,458.0 L1048.0,462.0 L1047.0,470.0" stroke="#a999aa" stroke-width="1.1" stroke-linejoin="round"/>
<path d="M1076.0,448.0 L1077.0,458.0 L1079.0,466.0" stroke="#a999aa" stroke-width="1.1" stroke-linejoin="round"/>
<path d="M892.4,413.0 L889.2,431.3 L884.8,437.6 L878.0,438.8" stroke="#e4708c" stroke-width="1" stroke-linejoin="round"/>
<path d="M878.0,454.0 L892.4,457.7 L898.7,465.3 L920.1,466.0 L929.0,464.7 L941.6,465.3 L954.2,460.3 L956.7,457.7 L974.4,459.0 L983.2,460.9 L1002.0,459.0 L1016.0,462.2 L1028.6,462.2 L1047.5,457.7" stroke="#e4708c" stroke-width="1" stroke-linejoin="round"/>
<path d="M1004.6,428.1 L1000.8,432.5 L1000.8,448.9 L999.0,452.0" stroke="#e4708c" stroke-width="1" stroke-linejoin="round"/>
<path d="M1110.6,376.0 L1116.9,385.9 L1119.4,409.8 L1121.9,425.0 L1119.4,447.7 L1123.2,460.3 L1127.0,465.3" stroke="#e4708c" stroke-width="1" stroke-linejoin="round"/>
<path d="M1085.4,384.6 L1090.4,394.7 L1085.4,401.0 L1084.1,411.1 L1077.8,421.2 L1071.5,433.8 L1071.5,437.6" stroke="#e4708c" stroke-width="1" stroke-linejoin="round"/>
<path d="M1000.8,432.5 L1016.0,435.0 L1028.6,435.0 L1043.1,432.5 L1055.1,434.4 L1058.9,437.6 L1071.5,437.6 L1074.6,441.4 L1074.0,447.7 L1066.4,457.7 L1057.6,467.0" stroke="#e4708c" stroke-width="1" stroke-linejoin="round"/>
<path d="M1055.1,434.4 L1060.0,446.0 L1070.0,458.0 L1078.0,466.0" stroke="#e4708c" stroke-width="1" stroke-linejoin="round"/>
<path d="M1135.8,454.0 L1140.8,460.3 L1141.0,468.0" stroke="#e4708c" stroke-width="1" stroke-linejoin="round"/>
<path d="M1128.0,465.0 L1136.0,462.0 L1144.0,456.0 L1153.0,451.4" stroke="#e4708c" stroke-width="1" stroke-linejoin="round"/>
<path d="M887.0,456.0 L887.0,470.0" stroke="#e4708c" stroke-width="1" stroke-linejoin="round"/>
<path d="M988.9,430.0 L996.0,428.5 L1003.4,428.1" stroke="#f0957a" stroke-width="0.9"/>
<path d="M990.0,429.0 L994.0,432.0 L1000.8,432.5" stroke="#f0957a" stroke-width="0.9"/>
<path d="M1032.4,394.7 L1034.9,409.8 L1041.2,425.0 L1043.1,432.5" stroke="#f0957a" stroke-width="0.9"/>
<path d="M1031.0,388.0 L1033.0,385.0" stroke="#f0957a" stroke-width="0.9"/>
<path d="M1085.4,379.0 L1085.4,384.6" stroke="#f0957a" stroke-width="0.9"/>
<circle cx="1060.9" cy="455.8" r="3.1" fill="#fff" stroke="#222" stroke-width="1"/><circle cx="1060.9" cy="455.8" r="1.1" fill="#222"/>
<circle cx="1127.7" cy="463.9" r="3.1" fill="#fff" stroke="#222" stroke-width="1"/><circle cx="1127.7" cy="463.9" r="1.1" fill="#222"/>
<text x="949" y="457.5" font-family="'DejaVu Sans',sans-serif" font-style="italic" font-size="9.6" fill="#7d5c80" stroke="#f3eef3" stroke-width="1.6" paint-order="stroke" stroke-linejoin="round">Niederösterreich</text>
<text x="1046.6" y="448.7" font-family="'DejaVu Sans',sans-serif" font-size="11" fill="#2b2b2b" stroke="#f4f4ee" stroke-width="1.6" paint-order="stroke" stroke-linejoin="round">Wien</text>
<text x="859.5" y="456.2" font-family="'DejaVu Sans',sans-serif" font-size="11" fill="#2b2b2b" stroke="#f4f4ee" stroke-width="1.6" paint-order="stroke" stroke-linejoin="round">Linz</text>
<circle cx="1014.7" cy="426.6" r="9.6" fill="#000" opacity="0.28" filter="url(#sh)"/>
<circle cx="1014.7" cy="425.9" r="9.6" fill="#fff"/><circle cx="1014.7" cy="425.9" r="5" fill="#2d86d3"/>
<rect x="878" y="466" width="275" height="10" fill="#fff" opacity="0.8"/>
<rect x="947" y="467.8" width="6.4" height="2.3" fill="#2f63c9"/><rect x="947" y="470.1" width="6.4" height="2.3" fill="#f5d21c"/>
<text x="955.3" y="473.4" font-family="'Liberation Sans',sans-serif" font-size="7.53" fill="#2b6f9e"><tspan>Leaflet</tspan><tspan fill="#555"> | © </tspan><tspan>OpenStreetMap</tspan><tspan fill="#444"> contributors</tspan></text>
<text x="1102" y="475.5" font-family="'DejaVu Sans',sans-serif" font-size="11.5" fill="#a8a8a8" opacity="0.75">Bratislava</text>
</g>
</svg>
</body></html>
